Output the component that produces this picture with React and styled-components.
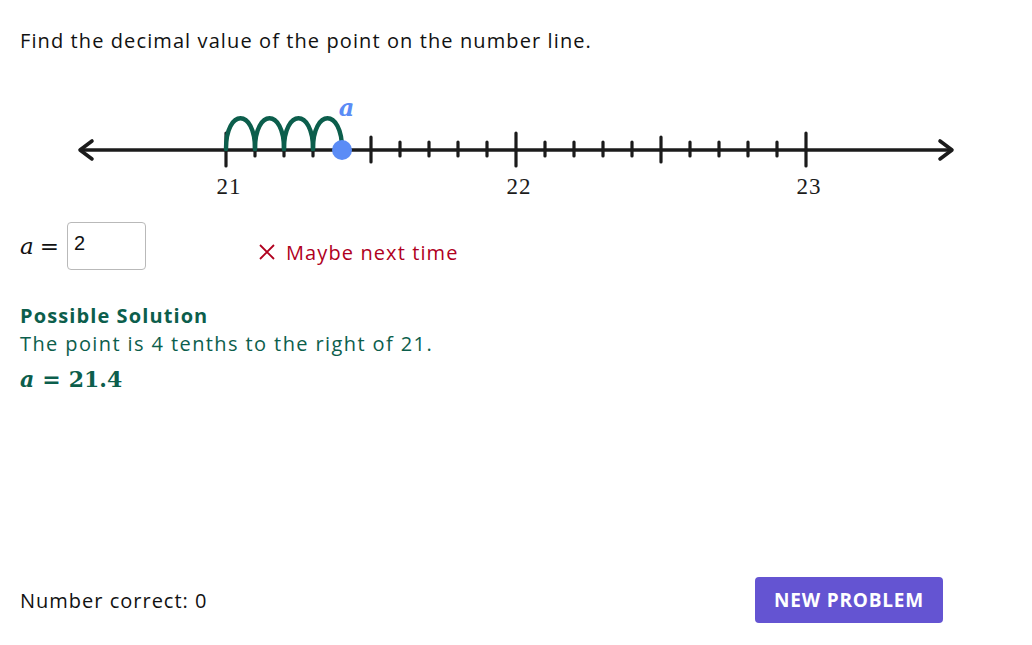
import styled, { createGlobalStyle } from 'styled-components'

const GlobalStyle = createGlobalStyle`
  html, body {
    margin: 0;
    padding: 0;
    background: #fff;
  }
  body {
    font-family: 'Open Sans', 'Noto Sans', sans-serif;
    letter-spacing: 1.1px;
    color: #111;
  }
`

const INK = '#1b1b1b'
const GREEN = '#0c5e4c'
const BLUE = '#5b8cf6'
const RED = '#b0001e'

const Page = styled.div`
  height: 100vh;
  box-sizing: border-box;
  padding: 28px 20px 22px;
  display: flex;
  flex-direction: column;
`

const Prompt = styled.p`
  margin: 0;
  font-size: 20px;
  line-height: 26px;
`

const LineFigure = styled.svg`
  display: block;
  margin-top: 36px;
  overflow: visible;
`

const AnswerRow = styled.div`
  margin-top: 17px;
  display: flex;
  align-items: center;
  height: 48px;
`

const MathText = styled.span`
  font-family: 'DejaVu Serif', 'Liberation Serif', serif;
  font-size: ${(p) => p.size || 21}px;
  font-weight: ${(p) => (p.bold ? 700 : 400)};
  color: ${(p) => p.color || 'inherit'};
  letter-spacing: 0;
  white-space: pre;
  display: inline-flex;
  align-items: baseline;
  i {
    font-style: italic;
  }
`

const Eq = styled.span`
  margin: 0 ${(p) => p.space || 5}px;
`

const AnswerInput = styled.input`
  box-sizing: border-box;
  width: 79px;
  height: 48px;
  margin-left: 2px;
  padding: 0 6px 6px;
  border: 1px solid #b9b9b9;
  border-radius: 4px;
  font: 400 20px 'Liberation Sans', Arial, sans-serif;
  color: #111;
  background: #fff;
  outline: none;
`

const Feedback = styled.div`
  margin-left: 112px;
  display: flex;
  align-items: center;
  gap: 10px;
  color: ${RED};
  font-size: 20px;
  padding-top: 12px;
`

const Solution = styled.section`
  margin-top: 32px;
  color: ${GREEN};
  h3 {
    margin: 0;
    font-size: 20px;
    line-height: 28px;
    font-weight: 700;
    letter-spacing: 1.1px;
  }
  p {
    margin: 0;
    font-size: 20px;
    line-height: 28px;
    letter-spacing: 1.4px;
  }
`

const SolutionMath = styled.div`
  margin-top: 7px;
  line-height: 28px;
`

const Footer = styled.footer`
  margin-top: auto;
  width: 923px;
  display: flex;
  align-items: center;
  justify-content: space-between;
  font-size: 20px;
  letter-spacing: 1px;
`

const Button = styled.button`
  width: 188px;
  height: 46px;
  border: none;
  border-radius: 4px;
  background: #6454d2;
  color: #fff;
  font: 700 19px 'Open Sans', sans-serif;
  letter-spacing: 0.8px;
  text-transform: uppercase;
  cursor: pointer;
`

const X0 = 226
const STEP = 29

function NumberLine({ value }) {
  const ticks = Array.from({ length: 21 }, (_, i) => i)
  const jumps = Math.round((value - 21) * 10)
  const px = X0 + jumps * STEP
  return (
    <LineFigure width='992' height='115' viewBox='20 90 992 115'>
      <line x1='80' y1='150' x2='952' y2='150' stroke={INK} strokeWidth='3.4' />
      <polyline points='92,141 80,150 92,159' fill='none' stroke={INK} strokeWidth='3.6' strokeLinecap='round' strokeLinejoin='round' />
      <polyline points='940,141 952,150 940,159' fill='none' stroke={INK} strokeWidth='3.6' strokeLinecap='round' strokeLinejoin='round' />
      {ticks.map((i) => {
        const x = X0 + i * STEP
        const h = i % 10 === 0 ? [133, 166] : i % 5 === 0 ? [137, 162] : [142, 156]
        return <line key={i} x1={x} y1={h[0]} x2={x} y2={h[1]} stroke={INK} strokeWidth='3.2' strokeLinecap='round' />
      })}
      {[21, 22, 23].map((n, k) => (
        <text key={n} x={X0 + k * 290 + 3} y='194' textAnchor='middle' fontFamily="'Liberation Serif', serif" fontSize='23' fill={INK}>
          {n}
        </text>
      ))}
      {Array.from({ length: jumps }, (_, j) => {
        const a = X0 + j * STEP
        const b = a + STEP
        return (
          <path key={j} d={`M${a} 149 C${a} 108 ${b} 108 ${b} 149`} fill='none' stroke={GREEN} strokeWidth='4.4' strokeLinecap='round' />
        )
      })}
      <circle cx={px} cy='150' r='10' fill={BLUE} />
      <text x={px + 5} y='116' textAnchor='middle' fontFamily="'DejaVu Serif', serif" fontStyle='italic' fontWeight='700' fontSize='24' fill={BLUE}>
        a
      </text>
    </LineFigure>
  )
}

export default function App() {
  return (
    <>
      <GlobalStyle />
      <Page>
        <Prompt>Find the decimal value of the point on the number line.</Prompt>
        <NumberLine value={21.4} />
        <AnswerRow>
          <MathText size={23}>
            <i>a</i>
            <Eq space={6}>=</Eq>
          </MathText>
          <AnswerInput defaultValue='2' />
          <Feedback>
            <svg width='18' height='18' viewBox='0 0 18 18'>
              <path d='M2 2 L16 16 M16 2 L2 16' stroke={RED} strokeWidth='1.8' fill='none' />
            </svg>
            Maybe next time
          </Feedback>
        </AnswerRow>
        <Solution>
          <h3>Possible Solution</h3>
          <p>The point is 4 tenths to the right of 21.</p>
          <SolutionMath>
            <MathText bold size={22} color={GREEN}>
              <i>a</i>
              <Eq space={8}>=</Eq>
              21.4
            </MathText>
          </SolutionMath>
        </Solution>
        <Footer>
          <span>Number correct: 0</span>
          <Button>New Problem</Button>
        </Footer>
      </Page>
    </>
  )
}
